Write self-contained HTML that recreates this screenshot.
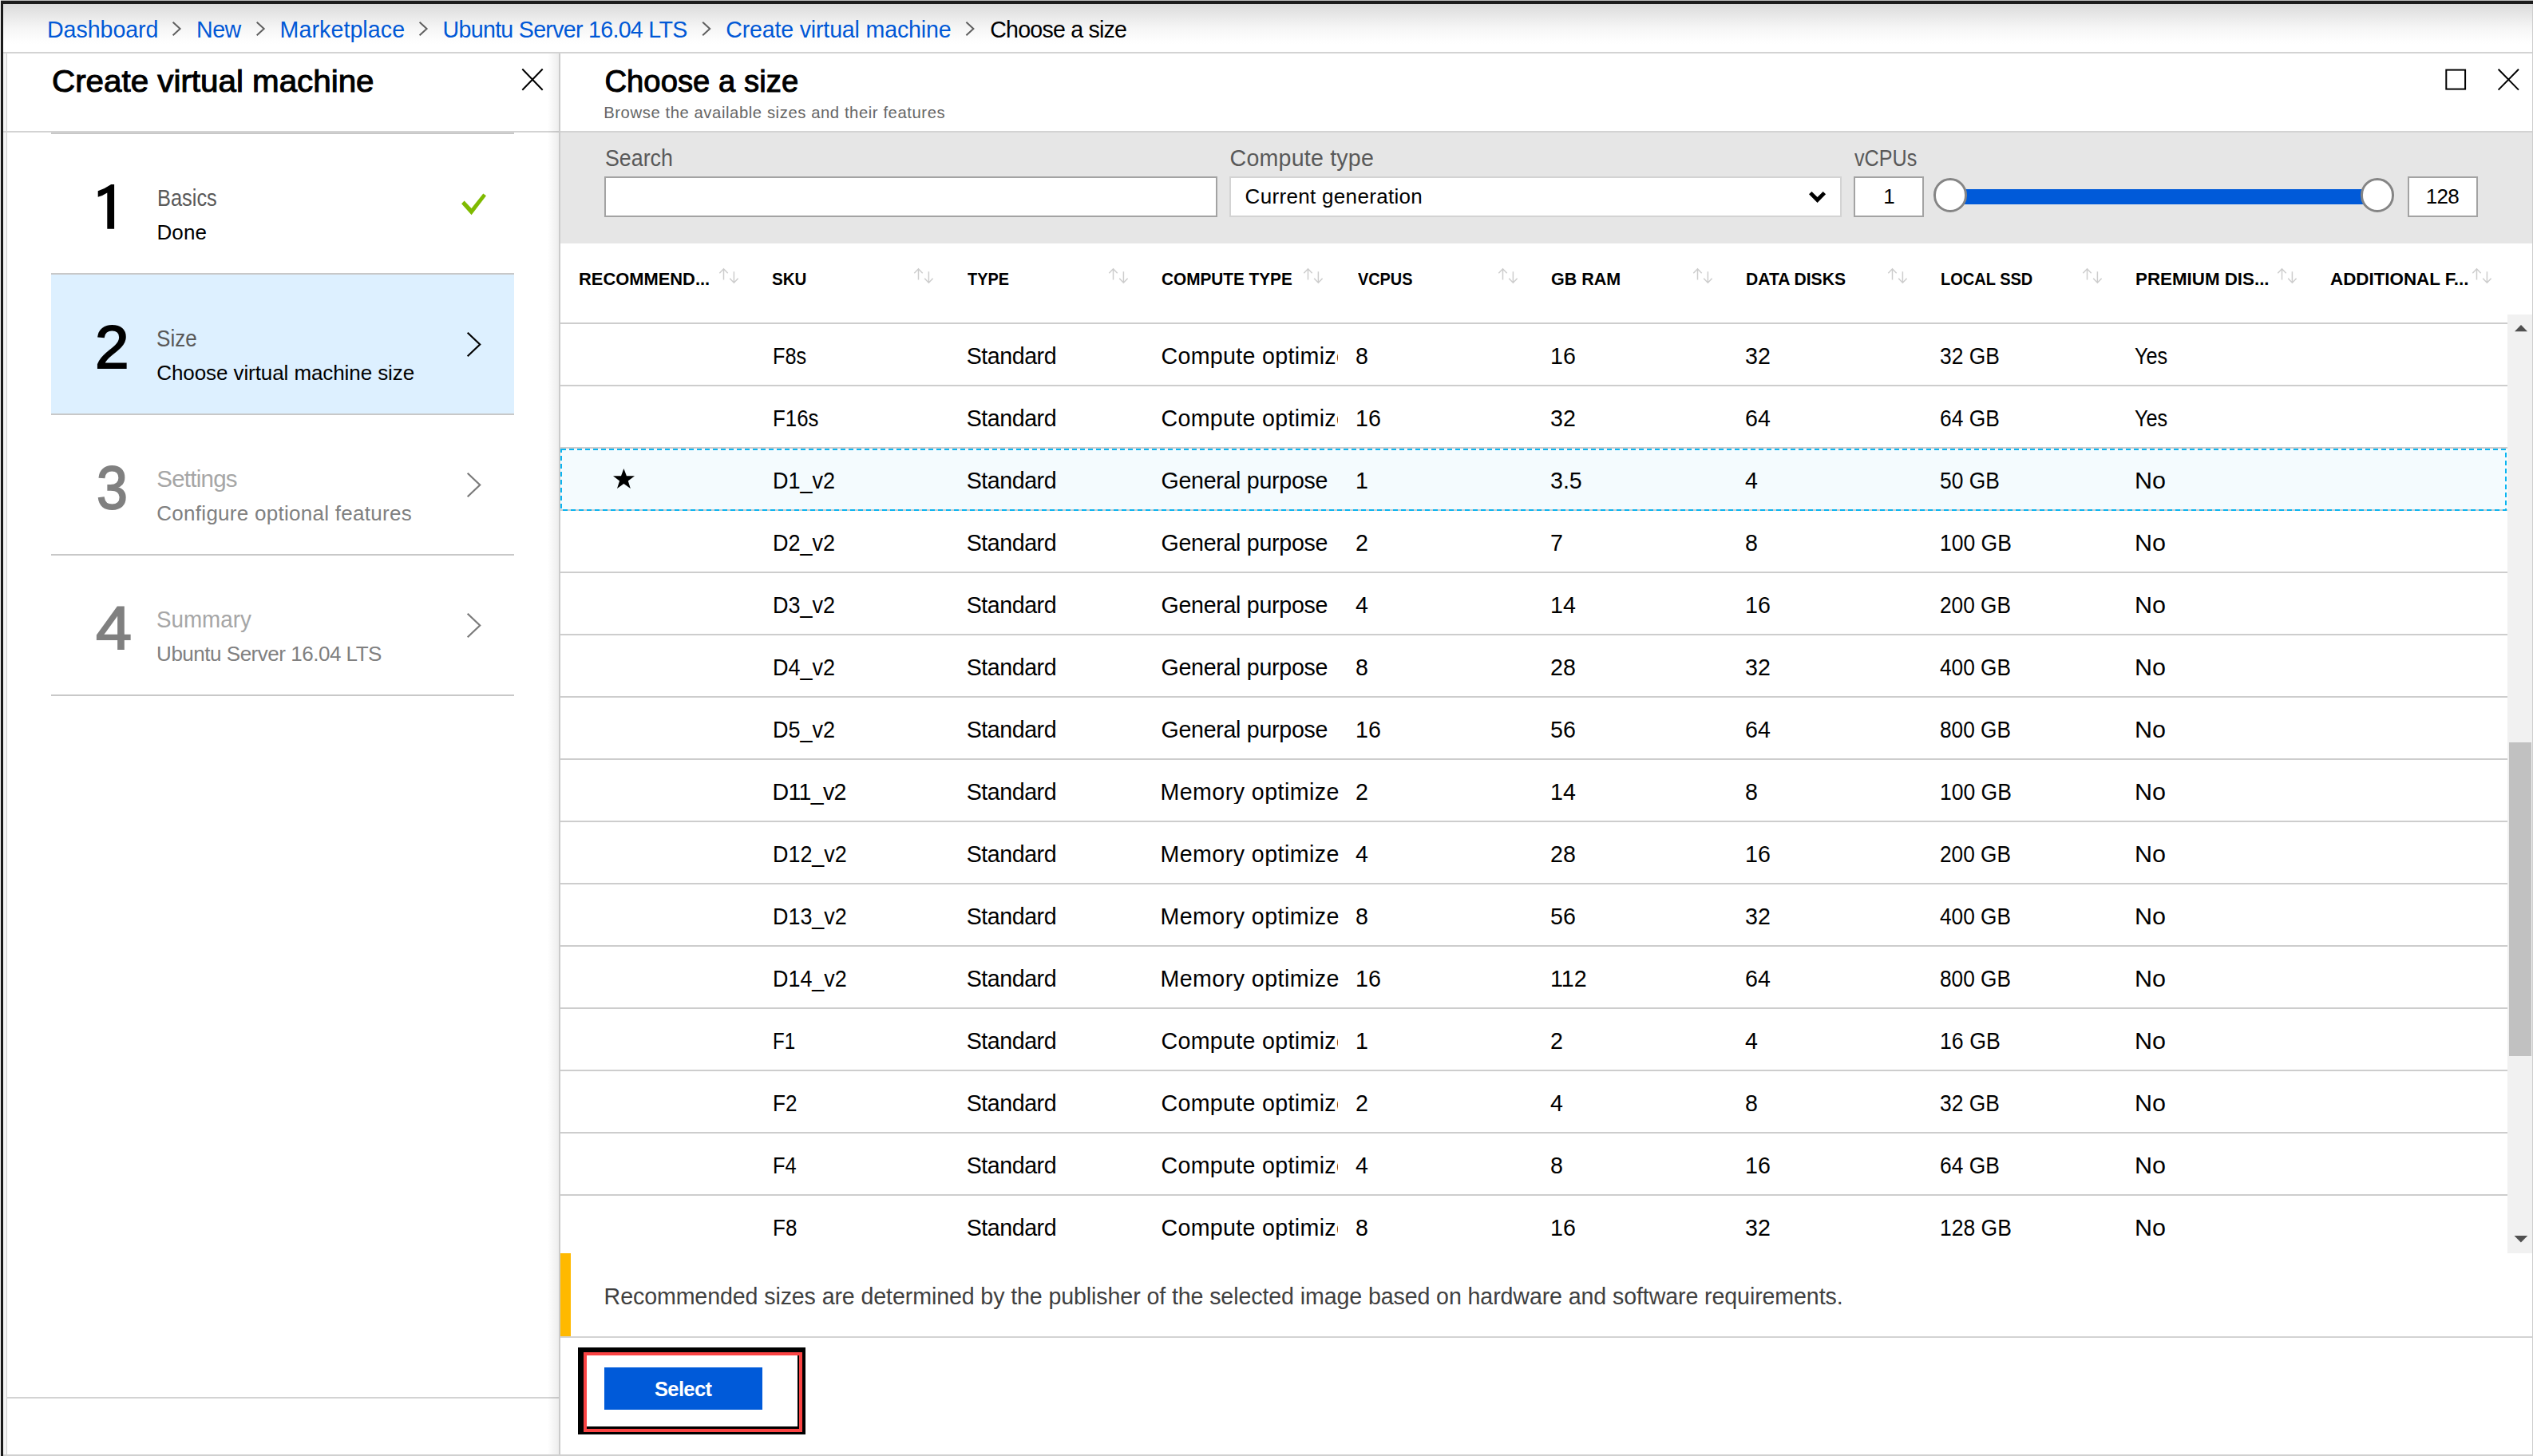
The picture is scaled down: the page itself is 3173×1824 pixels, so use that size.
<!DOCTYPE html>
<html lang="en"><head><meta charset="utf-8"><title>Choose a size - Microsoft Azure</title>
<style>
html,body{margin:0;padding:0}
body{width:3173px;height:1824px;position:relative;overflow:hidden;background:#fff;font-family:"Liberation Sans",sans-serif}
.t{position:absolute;white-space:pre;line-height:1;display:block}
.b{position:absolute}
svg{position:absolute;left:0;top:0;overflow:visible}
</style></head><body>

<!-- breadcrumb bar -->
<div class="b" style="left:0;top:0;width:3173px;height:65px;background:linear-gradient(to bottom,#dadada 0,#dadada 5px,#e4e4e4 15px,#eeeeee 26px,#f7f7f7 37px,#fcfcfc 47px,#fff 55px)"></div>
<div class="b" style="left:0;top:0;width:3173px;height:1px;background:#bdbdbd"></div>
<div class="b" style="left:1px;top:1px;width:3172px;height:4px;background:#1b1b1b"></div>
<div class="b" style="left:0;top:65px;width:3173px;height:2px;background:#d3d3d3"></div>

<!-- left gutter + frame -->
<div class="b" style="left:0;top:67px;width:9px;height:1757px;background:#f4f4f4"></div>
<div class="b" style="left:0;top:0;width:1px;height:1824px;background:#eee"></div>
<div class="b" style="left:1px;top:1px;width:3px;height:1823px;background:#1b1b1b"></div>
<div class="b" style="left:8px;top:67px;width:1px;height:1757px;background:#cfcfcf"></div>

<!-- left panel -->
<div class="b" style="left:4px;top:164px;width:697px;height:2px;background:#d3d3d3"></div>
<div class="b" style="left:64px;top:166px;width:580px;height:2px;background:#c8c8c8"></div>
<div class="b" style="left:64px;top:344px;width:580px;height:175px;background:#ddf0ff"></div>
<div class="b" style="left:64px;top:342px;width:580px;height:2px;background:#c8c8c8"></div>
<div class="b" style="left:64px;top:518px;width:580px;height:2px;background:#c8c8c8"></div>
<div class="b" style="left:64px;top:694px;width:580px;height:2px;background:#c8c8c8"></div>
<div class="b" style="left:64px;top:870px;width:580px;height:2px;background:#c8c8c8"></div>
<div class="b" style="left:9px;top:1750px;width:692px;height:2px;background:#d3d3d3"></div>
<!-- shadow + separator -->
<div class="b" style="left:686px;top:67px;width:14px;height:1757px;background:linear-gradient(to right,rgba(0,0,0,0),rgba(0,0,0,.07))"></div>
<div class="b" style="left:700px;top:67px;width:2px;height:1757px;background:#cbcbcb"></div>

<!-- right panel header line -->
<div class="b" style="left:702px;top:164px;width:2471px;height:2px;background:#d3d3d3"></div>
<!-- filter bar -->
<div class="b" style="left:702px;top:166px;width:2471px;height:139px;background:#e6e6e6"></div>
<div class="b" style="left:757px;top:221px;width:764px;height:47px;background:#fff;border:2px solid #a3a3a3"></div>
<div class="b" style="left:1540px;top:221px;width:763px;height:47px;background:#fff;border:2px solid #d3d3d3"></div>
<div class="b" style="left:2322px;top:221px;width:84px;height:47px;background:#fff;border:2px solid #a3a3a3"></div>
<div class="b" style="left:3016px;top:221px;width:84px;height:47px;background:#fff;border:2px solid #a3a3a3"></div>
<!-- slider -->
<div class="b" style="left:2444px;top:237px;width:534px;height:19px;background:#005ad9"></div>
<div class="b" style="left:2421.5px;top:223px;width:36.5px;height:36.5px;border-radius:50%;background:#fff;border:3.5px solid #858585"></div>
<div class="b" style="left:2956.5px;top:223px;width:36.5px;height:36.5px;border-radius:50%;background:#fff;border:3.5px solid #858585"></div>

<!-- table lines -->
<div class="b" style="left:702px;top:404px;width:2439px;height:2px;background:#cdcdcd"></div>
<div class="b" style="left:702px;top:482px;width:2439px;height:2px;background:#cdcdcd"></div>
<div class="b" style="left:702px;top:560px;width:2439px;height:2px;background:#cdcdcd"></div>
<div class="b" style="left:702px;top:638px;width:2439px;height:2px;background:#cdcdcd"></div>
<div class="b" style="left:702px;top:716px;width:2439px;height:2px;background:#cdcdcd"></div>
<div class="b" style="left:702px;top:794px;width:2439px;height:2px;background:#cdcdcd"></div>
<div class="b" style="left:702px;top:872px;width:2439px;height:2px;background:#cdcdcd"></div>
<div class="b" style="left:702px;top:950px;width:2439px;height:2px;background:#cdcdcd"></div>
<div class="b" style="left:702px;top:1028px;width:2439px;height:2px;background:#cdcdcd"></div>
<div class="b" style="left:702px;top:1106px;width:2439px;height:2px;background:#cdcdcd"></div>
<div class="b" style="left:702px;top:1184px;width:2439px;height:2px;background:#cdcdcd"></div>
<div class="b" style="left:702px;top:1262px;width:2439px;height:2px;background:#cdcdcd"></div>
<div class="b" style="left:702px;top:1340px;width:2439px;height:2px;background:#cdcdcd"></div>
<div class="b" style="left:702px;top:1418px;width:2439px;height:2px;background:#cdcdcd"></div>
<div class="b" style="left:702px;top:1496px;width:2439px;height:2px;background:#cdcdcd"></div>
<!-- selected row -->
<div class="b" style="left:702px;top:562px;width:2438px;height:76px;background:#f4fbfe"></div>

<!-- scrollbar -->
<div class="b" style="left:3141px;top:394px;width:32px;height:1176px;background:#f1f1f1"></div>
<div class="b" style="left:3143px;top:930px;width:28px;height:393px;background:#c1c1c1"></div>

<!-- info strip -->
<div class="b" style="left:702px;top:1570px;width:13px;height:104px;background:#ffb900"></div>
<div class="b" style="left:702px;top:1674px;width:2471px;height:2px;background:#d3d3d3"></div>

<!-- highlight + select button -->
<div class="b" style="left:724px;top:1688px;width:285px;height:109px;background:#000"></div>
<div class="b" style="left:731px;top:1694px;width:274px;height:100px;background:#fa4343"></div>
<div class="b" style="left:735px;top:1698px;width:266px;height:92px;background:#000"></div>
<div class="b" style="left:735px;top:1698px;width:264px;height:89px;background:#fff"></div>
<div class="b" style="left:757px;top:1713px;width:198px;height:53px;background:#005ad9"></div>

<!-- right frame -->
<div class="b" style="left:3172px;top:5px;width:1px;height:1819px;background:#cdcdcd"></div>
<!-- bottom frame -->
<div class="b" style="left:4px;top:1822px;width:3169px;height:2px;background:#d0d0d0"></div>

<svg width="3173" height="1824" viewBox="0 0 3173 1824" fill="none">
<!-- breadcrumb chevrons -->
<g stroke="#5f5f5f" stroke-width="2">
<path d="M216.6 27.7l9 8.3-9 8.3"/>
<path d="M321.7 27.7l9 8.3-9 8.3"/>
<path d="M525.6 27.7l9 8.3-9 8.3"/>
<path d="M880.2 27.7l9 8.3-9 8.3"/>
<path d="M1210.4 27.7l9 8.3-9 8.3"/>
</g>
<!-- close / maximize -->
<g stroke="#000" stroke-width="2">
<path d="M654.3 86.5l25.4 26.2M679.7 86.5l-25.4 26.2"/>
<path d="M3129.6 86.8l25.4 25.8M3155 86.8l-25.4 25.8"/>
<rect x="3064.3" y="87.6" width="23.8" height="24"/>
</g>
<!-- step 1 numeral -->
<path d="M143.1 230.9V286.8H134.3V241.6Q128.5 245.5 122.7 246.8V239.2Q131 236.5 139.2 230.9z" fill="#000"/>
<!-- green check -->
<path d="M578.1 255.2l3.5-3.7 9 9.4 14.7-18.4 3.7 2.8-18.4 23.9z" fill="#7fba00"/>
<!-- step chevrons -->
<path d="M585.7 416.7l15.5 14.8-15.5 14.8" stroke="#000" stroke-width="2.2"/>
<path d="M585.7 592.7l15.5 14.8-15.5 14.8" stroke="#7a7a7a" stroke-width="2.2"/>
<path d="M585.7 768.7l15.5 14.8-15.5 14.8" stroke="#7a7a7a" stroke-width="2.2"/>
<!-- dropdown caret -->
<path d="M2266 243.3l3.5-3.3 7.1 7.1 7.1-7.1 3.4 3.3-10.5 10.8z" fill="#000"/>
<!-- sort icons -->
<g stroke="#cdcdcd" stroke-width="1.5">
<path d="M906.5 350.6V336.6M901.3 342.2l5.2-5.4 5.2 5.4M919.4 340.2V354.2M914.1999999999999 348.8l5.2 5.4 5.2-5.4"/>
<path d="M1150.5 350.6V336.6M1145.3 342.2l5.2-5.4 5.2 5.4M1163.4 340.2V354.2M1158.2 348.8l5.2 5.4 5.2-5.4"/>
<path d="M1394.5 350.6V336.6M1389.3 342.2l5.2-5.4 5.2 5.4M1407.4 340.2V354.2M1402.2 348.8l5.2 5.4 5.2-5.4"/>
<path d="M1638.5 350.6V336.6M1633.3 342.2l5.2-5.4 5.2 5.4M1651.4 340.2V354.2M1646.2 348.8l5.2 5.4 5.2-5.4"/>
<path d="M1882.5 350.6V336.6M1877.3 342.2l5.2-5.4 5.2 5.4M1895.4 340.2V354.2M1890.2 348.8l5.2 5.4 5.2-5.4"/>
<path d="M2126.5 350.6V336.6M2121.3 342.2l5.2-5.4 5.2 5.4M2139.4 340.2V354.2M2134.2000000000003 348.8l5.2 5.4 5.2-5.4"/>
<path d="M2370.5 350.6V336.6M2365.3 342.2l5.2-5.4 5.2 5.4M2383.4 340.2V354.2M2378.2000000000003 348.8l5.2 5.4 5.2-5.4"/>
<path d="M2614.5 350.6V336.6M2609.3 342.2l5.2-5.4 5.2 5.4M2627.4 340.2V354.2M2622.2000000000003 348.8l5.2 5.4 5.2-5.4"/>
<path d="M2858.5 350.6V336.6M2853.3 342.2l5.2-5.4 5.2 5.4M2871.4 340.2V354.2M2866.2000000000003 348.8l5.2 5.4 5.2-5.4"/>
<path d="M3102.5 350.6V336.6M3097.3 342.2l5.2-5.4 5.2 5.4M3115.4 340.2V354.2M3110.2000000000003 348.8l5.2 5.4 5.2-5.4"/>
</g>
<!-- selected row dashes -->
<rect x="703" y="563" width="2436" height="76" stroke="#0ab4f0" stroke-width="2" stroke-dasharray="6 4"/>
<!-- star -->
<path d="M781.4 587l3.5 9.3h10.1l-8.2 6.2 3 9.5-8.4-5.9-8.4 5.9 3.1-9.5-8.1-6.2h10z" fill="#000"/>
<!-- scrollbar arrows -->
<path d="M3150 415.2l8-8.2 8 8.2z" fill="#505050"/>
<path d="M3149.5 1548l8.4 8.6 8.4-8.6z" fill="#505050"/>
</svg>

<span class="t" style="left:59.00px;top:23px;font-size:28.6px;color:#0058d6;letter-spacing:-0.050px;">Dashboard</span>
<span class="t" style="left:246.10px;top:23px;font-size:28.6px;color:#0058d6;letter-spacing:-0.600px;">New</span>
<span class="t" style="left:350.60px;top:23px;font-size:28.6px;color:#0058d6;letter-spacing:0.070px;">Marketplace</span>
<span class="t" style="left:554.60px;top:23px;font-size:28.6px;color:#0058d6;letter-spacing:-0.705px;">Ubuntu Server 16.04 LTS</span>
<span class="t" style="left:909.20px;top:23px;font-size:28.6px;color:#0058d6;letter-spacing:-0.176px;">Create virtual machine</span>
<span class="t" style="left:1240.20px;top:23px;font-size:28.6px;color:#000;letter-spacing:-0.792px;">Choose a size</span>
<span class="t" style="left:65.04px;top:83px;font-size:38.2px;color:#000;transform:scaleX(1.0563);transform-origin:0 0;-webkit-text-stroke:1.0px #000;">Create virtual machine</span>
<span class="t" style="left:757.40px;top:83px;font-size:38.2px;color:#000;letter-spacing:0.067px;-webkit-text-stroke:1.0px #000;">Choose a size</span>
<span class="t" style="left:756.20px;top:131px;font-size:20.3px;color:#666;letter-spacing:0.568px;">Browse the available sizes and their features</span>
<span class="t" style="left:119.17px;top:397px;font-size:76px;color:#000;transform:scaleX(1.0083);transform-origin:0 0;-webkit-text-stroke:1.8px #000;">2</span>
<span class="t" style="left:120.96px;top:573px;font-size:76px;color:#808080;transform:scaleX(0.9211);transform-origin:0 0;-webkit-text-stroke:1.8px #808080;">3</span>
<span class="t" style="left:119.73px;top:749px;font-size:76px;color:#808080;transform:scaleX(1.0650);transform-origin:0 0;-webkit-text-stroke:1.8px #808080;">4</span>
<span class="t" style="left:196.88px;top:233px;font-size:29.5px;color:#595959;transform:scaleX(0.8607);transform-origin:0 0;">Basics</span>
<span class="t" style="left:196.40px;top:278px;font-size:26px;color:#000;letter-spacing:0.167px;">Done</span>
<span class="t" style="left:196.42px;top:409px;font-size:29.5px;color:#595959;transform:scaleX(0.8836);transform-origin:0 0;">Size</span>
<span class="t" style="left:196.30px;top:454px;font-size:26px;color:#000;letter-spacing:-0.088px;">Choose virtual machine size</span>
<span class="t" style="left:196.30px;top:585px;font-size:29.5px;color:#a6a6a6;letter-spacing:-0.757px;">Settings</span>
<span class="t" style="left:196.30px;top:630px;font-size:26px;color:#808080;letter-spacing:0.277px;">Configure optional features</span>
<span class="t" style="left:196.36px;top:761px;font-size:29.5px;color:#a6a6a6;transform:scaleX(0.9416);transform-origin:0 0;">Summary</span>
<span class="t" style="left:196.10px;top:806px;font-size:26px;color:#808080;letter-spacing:-0.482px;">Ubuntu Server 16.04 LTS</span>
<span class="t" style="left:757.66px;top:184px;font-size:28.6px;color:#595959;transform:scaleX(0.9364);transform-origin:0 0;">Search</span>
<span class="t" style="left:1540.60px;top:184px;font-size:28.6px;color:#595959;letter-spacing:0.200px;">Compute type</span>
<span class="t" style="left:2322.90px;top:184px;font-size:28.6px;color:#595959;transform:scaleX(0.8795);transform-origin:0 0;">vCPUs</span>
<span class="t" style="left:1559.60px;top:233px;font-size:26px;color:#000;letter-spacing:0.318px;">Current generation</span>
<span class="t" style="left:2359.20px;top:233px;font-size:26px;color:#000;">1</span>
<span class="t" style="left:3038.80px;top:233px;font-size:26px;color:#000;letter-spacing:-0.700px;">128</span>
<span class="t" style="left:725.03px;top:339px;font-size:22.5px;color:#000;font-weight:700;transform:scaleX(0.9729);transform-origin:0 0;">RECOMMEND...</span>
<span class="t" style="left:966.89px;top:339px;font-size:22.5px;color:#000;font-weight:700;transform:scaleX(0.9111);transform-origin:0 0;">SKU</span>
<span class="t" style="left:1211.60px;top:339px;font-size:22.5px;color:#000;font-weight:700;transform:scaleX(0.8862);transform-origin:0 0;">TYPE</span>
<span class="t" style="left:1455.08px;top:339px;font-size:22.5px;color:#000;font-weight:700;transform:scaleX(0.9227);transform-origin:0 0;">COMPUTE TYPE</span>
<span class="t" style="left:1700.50px;top:339px;font-size:22.5px;color:#000;font-weight:700;transform:scaleX(0.8831);transform-origin:0 0;">VCPUS</span>
<span class="t" style="left:1943.04px;top:339px;font-size:22.5px;color:#000;font-weight:700;transform:scaleX(0.9551);transform-origin:0 0;">GB RAM</span>
<span class="t" style="left:2187.06px;top:339px;font-size:22.5px;color:#000;font-weight:700;transform:scaleX(0.9371);transform-origin:0 0;">DATA DISKS</span>
<span class="t" style="left:2431.11px;top:339px;font-size:22.5px;color:#000;font-weight:700;transform:scaleX(0.8898);transform-origin:0 0;">LOCAL SSD</span>
<span class="t" style="left:2675.21px;top:339px;font-size:22.5px;color:#000;font-weight:700;transform:scaleX(0.9928);transform-origin:0 0;">PREMIUM DIS...</span>
<span class="t" style="left:2919.31px;top:339px;font-size:22.5px;color:#000;font-weight:700;transform:scaleX(0.9936);transform-origin:0 0;">ADDITIONAL F...</span>
<span class="t" style="left:967.83px;top:432px;font-size:28.6px;color:#000;transform:scaleX(0.8844);transform-origin:0 0;">F8s</span>
<span class="t" style="left:1210.70px;top:432px;font-size:28.6px;color:#000;letter-spacing:-0.457px;">Standard</span>
<span class="t" style="left:1454.50px;top:432px;font-size:28.6px;color:#000;letter-spacing:0.329px;width:221.80px;overflow:hidden;">Compute optimized</span>
<span class="t" style="left:1698.00px;top:432px;font-size:28.6px;color:#000;">8</span>
<span class="t" style="left:1942.00px;top:432px;font-size:28.6px;color:#000;">16</span>
<span class="t" style="left:2186.00px;top:432px;font-size:28.6px;color:#000;">32</span>
<span class="t" style="left:2430.00px;top:432px;font-size:28.6px;color:#000;transform:scaleX(0.9228);transform-origin:0 0;">32 GB</span>
<span class="t" style="left:2674.00px;top:432px;font-size:28.6px;color:#000;transform:scaleX(0.8844);transform-origin:0 0;">Yes</span>
<span class="t" style="left:967.79px;top:510px;font-size:28.6px;color:#000;transform:scaleX(0.9033);transform-origin:0 0;">F16s</span>
<span class="t" style="left:1210.70px;top:510px;font-size:28.6px;color:#000;letter-spacing:-0.457px;">Standard</span>
<span class="t" style="left:1454.50px;top:510px;font-size:28.6px;color:#000;letter-spacing:0.329px;width:221.80px;overflow:hidden;">Compute optimized</span>
<span class="t" style="left:1698.00px;top:510px;font-size:28.6px;color:#000;">16</span>
<span class="t" style="left:1942.00px;top:510px;font-size:28.6px;color:#000;">32</span>
<span class="t" style="left:2186.00px;top:510px;font-size:28.6px;color:#000;">64</span>
<span class="t" style="left:2430.00px;top:510px;font-size:28.6px;color:#000;transform:scaleX(0.9228);transform-origin:0 0;">64 GB</span>
<span class="t" style="left:2674.00px;top:510px;font-size:28.6px;color:#000;transform:scaleX(0.8844);transform-origin:0 0;">Yes</span>
<span class="t" style="left:967.71px;top:588px;font-size:28.6px;color:#000;transform:scaleX(0.9443);transform-origin:0 0;">D1_v2</span>
<span class="t" style="left:1210.70px;top:588px;font-size:28.6px;color:#000;letter-spacing:-0.457px;">Standard</span>
<span class="t" style="left:1454.50px;top:588px;font-size:28.6px;color:#000;letter-spacing:-0.293px;">General purpose</span>
<span class="t" style="left:1698.00px;top:588px;font-size:28.6px;color:#000;">1</span>
<span class="t" style="left:1942.00px;top:588px;font-size:28.6px;color:#000;">3.5</span>
<span class="t" style="left:2186.00px;top:588px;font-size:28.6px;color:#000;">4</span>
<span class="t" style="left:2430.00px;top:588px;font-size:28.6px;color:#000;transform:scaleX(0.9228);transform-origin:0 0;">50 GB</span>
<span class="t" style="left:2674.00px;top:588px;font-size:28.6px;color:#000;transform:scaleX(1.0676);transform-origin:0 0;">No</span>
<span class="t" style="left:967.71px;top:666px;font-size:28.6px;color:#000;transform:scaleX(0.9443);transform-origin:0 0;">D2_v2</span>
<span class="t" style="left:1210.70px;top:666px;font-size:28.6px;color:#000;letter-spacing:-0.457px;">Standard</span>
<span class="t" style="left:1454.50px;top:666px;font-size:28.6px;color:#000;letter-spacing:-0.293px;">General purpose</span>
<span class="t" style="left:1698.00px;top:666px;font-size:28.6px;color:#000;">2</span>
<span class="t" style="left:1942.00px;top:666px;font-size:28.6px;color:#000;">7</span>
<span class="t" style="left:2186.00px;top:666px;font-size:28.6px;color:#000;">8</span>
<span class="t" style="left:2430.00px;top:666px;font-size:28.6px;color:#000;transform:scaleX(0.9266);transform-origin:0 0;">100 GB</span>
<span class="t" style="left:2674.00px;top:666px;font-size:28.6px;color:#000;transform:scaleX(1.0676);transform-origin:0 0;">No</span>
<span class="t" style="left:967.71px;top:744px;font-size:28.6px;color:#000;transform:scaleX(0.9443);transform-origin:0 0;">D3_v2</span>
<span class="t" style="left:1210.70px;top:744px;font-size:28.6px;color:#000;letter-spacing:-0.457px;">Standard</span>
<span class="t" style="left:1454.50px;top:744px;font-size:28.6px;color:#000;letter-spacing:-0.293px;">General purpose</span>
<span class="t" style="left:1698.00px;top:744px;font-size:28.6px;color:#000;">4</span>
<span class="t" style="left:1942.00px;top:744px;font-size:28.6px;color:#000;">14</span>
<span class="t" style="left:2186.00px;top:744px;font-size:28.6px;color:#000;">16</span>
<span class="t" style="left:2430.00px;top:744px;font-size:28.6px;color:#000;transform:scaleX(0.9168);transform-origin:0 0;">200 GB</span>
<span class="t" style="left:2674.00px;top:744px;font-size:28.6px;color:#000;transform:scaleX(1.0676);transform-origin:0 0;">No</span>
<span class="t" style="left:967.71px;top:822px;font-size:28.6px;color:#000;transform:scaleX(0.9443);transform-origin:0 0;">D4_v2</span>
<span class="t" style="left:1210.70px;top:822px;font-size:28.6px;color:#000;letter-spacing:-0.457px;">Standard</span>
<span class="t" style="left:1454.50px;top:822px;font-size:28.6px;color:#000;letter-spacing:-0.293px;">General purpose</span>
<span class="t" style="left:1698.00px;top:822px;font-size:28.6px;color:#000;">8</span>
<span class="t" style="left:1942.00px;top:822px;font-size:28.6px;color:#000;">28</span>
<span class="t" style="left:2186.00px;top:822px;font-size:28.6px;color:#000;">32</span>
<span class="t" style="left:2430.00px;top:822px;font-size:28.6px;color:#000;transform:scaleX(0.9168);transform-origin:0 0;">400 GB</span>
<span class="t" style="left:2674.00px;top:822px;font-size:28.6px;color:#000;transform:scaleX(1.0676);transform-origin:0 0;">No</span>
<span class="t" style="left:967.71px;top:900px;font-size:28.6px;color:#000;transform:scaleX(0.9443);transform-origin:0 0;">D5_v2</span>
<span class="t" style="left:1210.70px;top:900px;font-size:28.6px;color:#000;letter-spacing:-0.457px;">Standard</span>
<span class="t" style="left:1454.50px;top:900px;font-size:28.6px;color:#000;letter-spacing:-0.293px;">General purpose</span>
<span class="t" style="left:1698.00px;top:900px;font-size:28.6px;color:#000;">16</span>
<span class="t" style="left:1942.00px;top:900px;font-size:28.6px;color:#000;">56</span>
<span class="t" style="left:2186.00px;top:900px;font-size:28.6px;color:#000;">64</span>
<span class="t" style="left:2430.00px;top:900px;font-size:28.6px;color:#000;transform:scaleX(0.9168);transform-origin:0 0;">800 GB</span>
<span class="t" style="left:2674.00px;top:900px;font-size:28.6px;color:#000;transform:scaleX(1.0676);transform-origin:0 0;">No</span>
<span class="t" style="left:967.60px;top:978px;font-size:28.6px;color:#000;letter-spacing:-0.720px;">D11_v2</span>
<span class="t" style="left:1210.70px;top:978px;font-size:28.6px;color:#000;letter-spacing:-0.457px;">Standard</span>
<span class="t" style="left:1453.50px;top:978px;font-size:28.6px;color:#000;letter-spacing:0.443px;width:223.50px;overflow:hidden;">Memory optimized</span>
<span class="t" style="left:1698.00px;top:978px;font-size:28.6px;color:#000;">2</span>
<span class="t" style="left:1942.00px;top:978px;font-size:28.6px;color:#000;">14</span>
<span class="t" style="left:2186.00px;top:978px;font-size:28.6px;color:#000;">8</span>
<span class="t" style="left:2430.00px;top:978px;font-size:28.6px;color:#000;transform:scaleX(0.9266);transform-origin:0 0;">100 GB</span>
<span class="t" style="left:2674.00px;top:978px;font-size:28.6px;color:#000;transform:scaleX(1.0676);transform-origin:0 0;">No</span>
<span class="t" style="left:967.72px;top:1056px;font-size:28.6px;color:#000;transform:scaleX(0.9411);transform-origin:0 0;">D12_v2</span>
<span class="t" style="left:1210.70px;top:1056px;font-size:28.6px;color:#000;letter-spacing:-0.457px;">Standard</span>
<span class="t" style="left:1453.50px;top:1056px;font-size:28.6px;color:#000;letter-spacing:0.443px;width:223.50px;overflow:hidden;">Memory optimized</span>
<span class="t" style="left:1698.00px;top:1056px;font-size:28.6px;color:#000;">4</span>
<span class="t" style="left:1942.00px;top:1056px;font-size:28.6px;color:#000;">28</span>
<span class="t" style="left:2186.00px;top:1056px;font-size:28.6px;color:#000;">16</span>
<span class="t" style="left:2430.00px;top:1056px;font-size:28.6px;color:#000;transform:scaleX(0.9168);transform-origin:0 0;">200 GB</span>
<span class="t" style="left:2674.00px;top:1056px;font-size:28.6px;color:#000;transform:scaleX(1.0676);transform-origin:0 0;">No</span>
<span class="t" style="left:967.72px;top:1134px;font-size:28.6px;color:#000;transform:scaleX(0.9411);transform-origin:0 0;">D13_v2</span>
<span class="t" style="left:1210.70px;top:1134px;font-size:28.6px;color:#000;letter-spacing:-0.457px;">Standard</span>
<span class="t" style="left:1453.50px;top:1134px;font-size:28.6px;color:#000;letter-spacing:0.443px;width:223.50px;overflow:hidden;">Memory optimized</span>
<span class="t" style="left:1698.00px;top:1134px;font-size:28.6px;color:#000;">8</span>
<span class="t" style="left:1942.00px;top:1134px;font-size:28.6px;color:#000;">56</span>
<span class="t" style="left:2186.00px;top:1134px;font-size:28.6px;color:#000;">32</span>
<span class="t" style="left:2430.00px;top:1134px;font-size:28.6px;color:#000;transform:scaleX(0.9168);transform-origin:0 0;">400 GB</span>
<span class="t" style="left:2674.00px;top:1134px;font-size:28.6px;color:#000;transform:scaleX(1.0676);transform-origin:0 0;">No</span>
<span class="t" style="left:967.72px;top:1212px;font-size:28.6px;color:#000;transform:scaleX(0.9411);transform-origin:0 0;">D14_v2</span>
<span class="t" style="left:1210.70px;top:1212px;font-size:28.6px;color:#000;letter-spacing:-0.457px;">Standard</span>
<span class="t" style="left:1453.50px;top:1212px;font-size:28.6px;color:#000;letter-spacing:0.443px;width:223.50px;overflow:hidden;">Memory optimized</span>
<span class="t" style="left:1698.00px;top:1212px;font-size:28.6px;color:#000;">16</span>
<span class="t" style="left:1942.00px;top:1212px;font-size:28.6px;color:#000;">112</span>
<span class="t" style="left:2186.00px;top:1212px;font-size:28.6px;color:#000;">64</span>
<span class="t" style="left:2430.00px;top:1212px;font-size:28.6px;color:#000;transform:scaleX(0.9168);transform-origin:0 0;">800 GB</span>
<span class="t" style="left:2674.00px;top:1212px;font-size:28.6px;color:#000;transform:scaleX(1.0676);transform-origin:0 0;">No</span>
<span class="t" style="left:967.91px;top:1290px;font-size:28.6px;color:#000;transform:scaleX(0.8433);transform-origin:0 0;">F1</span>
<span class="t" style="left:1210.70px;top:1290px;font-size:28.6px;color:#000;letter-spacing:-0.457px;">Standard</span>
<span class="t" style="left:1454.50px;top:1290px;font-size:28.6px;color:#000;letter-spacing:0.329px;width:221.80px;overflow:hidden;">Compute optimized</span>
<span class="t" style="left:1698.00px;top:1290px;font-size:28.6px;color:#000;">1</span>
<span class="t" style="left:1942.00px;top:1290px;font-size:28.6px;color:#000;">2</span>
<span class="t" style="left:2186.00px;top:1290px;font-size:28.6px;color:#000;">4</span>
<span class="t" style="left:2430.00px;top:1290px;font-size:28.6px;color:#000;transform:scaleX(0.9346);transform-origin:0 0;">16 GB</span>
<span class="t" style="left:2674.00px;top:1290px;font-size:28.6px;color:#000;transform:scaleX(1.0676);transform-origin:0 0;">No</span>
<span class="t" style="left:967.77px;top:1368px;font-size:28.6px;color:#000;transform:scaleX(0.9133);transform-origin:0 0;">F2</span>
<span class="t" style="left:1210.70px;top:1368px;font-size:28.6px;color:#000;letter-spacing:-0.457px;">Standard</span>
<span class="t" style="left:1454.50px;top:1368px;font-size:28.6px;color:#000;letter-spacing:0.329px;width:221.80px;overflow:hidden;">Compute optimized</span>
<span class="t" style="left:1698.00px;top:1368px;font-size:28.6px;color:#000;">2</span>
<span class="t" style="left:1942.00px;top:1368px;font-size:28.6px;color:#000;">4</span>
<span class="t" style="left:2186.00px;top:1368px;font-size:28.6px;color:#000;">8</span>
<span class="t" style="left:2430.00px;top:1368px;font-size:28.6px;color:#000;transform:scaleX(0.9228);transform-origin:0 0;">32 GB</span>
<span class="t" style="left:2674.00px;top:1368px;font-size:28.6px;color:#000;transform:scaleX(1.0676);transform-origin:0 0;">No</span>
<span class="t" style="left:967.82px;top:1446px;font-size:28.6px;color:#000;transform:scaleX(0.8903);transform-origin:0 0;">F4</span>
<span class="t" style="left:1210.70px;top:1446px;font-size:28.6px;color:#000;letter-spacing:-0.457px;">Standard</span>
<span class="t" style="left:1454.50px;top:1446px;font-size:28.6px;color:#000;letter-spacing:0.329px;width:221.80px;overflow:hidden;">Compute optimized</span>
<span class="t" style="left:1698.00px;top:1446px;font-size:28.6px;color:#000;">4</span>
<span class="t" style="left:1942.00px;top:1446px;font-size:28.6px;color:#000;">8</span>
<span class="t" style="left:2186.00px;top:1446px;font-size:28.6px;color:#000;">16</span>
<span class="t" style="left:2430.00px;top:1446px;font-size:28.6px;color:#000;transform:scaleX(0.9228);transform-origin:0 0;">64 GB</span>
<span class="t" style="left:2674.00px;top:1446px;font-size:28.6px;color:#000;transform:scaleX(1.0676);transform-origin:0 0;">No</span>
<span class="t" style="left:967.77px;top:1524px;font-size:28.6px;color:#000;transform:scaleX(0.9133);transform-origin:0 0;">F8</span>
<span class="t" style="left:1210.70px;top:1524px;font-size:28.6px;color:#000;letter-spacing:-0.457px;">Standard</span>
<span class="t" style="left:1454.50px;top:1524px;font-size:28.6px;color:#000;letter-spacing:0.329px;width:221.80px;overflow:hidden;">Compute optimized</span>
<span class="t" style="left:1698.00px;top:1524px;font-size:28.6px;color:#000;">8</span>
<span class="t" style="left:1942.00px;top:1524px;font-size:28.6px;color:#000;">16</span>
<span class="t" style="left:2186.00px;top:1524px;font-size:28.6px;color:#000;">32</span>
<span class="t" style="left:2430.00px;top:1524px;font-size:28.6px;color:#000;transform:scaleX(0.9266);transform-origin:0 0;">128 GB</span>
<span class="t" style="left:2674.00px;top:1524px;font-size:28.6px;color:#000;transform:scaleX(1.0676);transform-origin:0 0;">No</span>
<span class="t" style="left:756.60px;top:1610px;font-size:28.6px;color:#404040;letter-spacing:-0.104px;">Recommended sizes are determined by the publisher of the selected image based on hardware and software requirements.</span>
<span class="t" style="left:819.90px;top:1728px;font-size:25.5px;color:#fff;font-weight:700;letter-spacing:-0.600px;">Select</span>
</body></html>
